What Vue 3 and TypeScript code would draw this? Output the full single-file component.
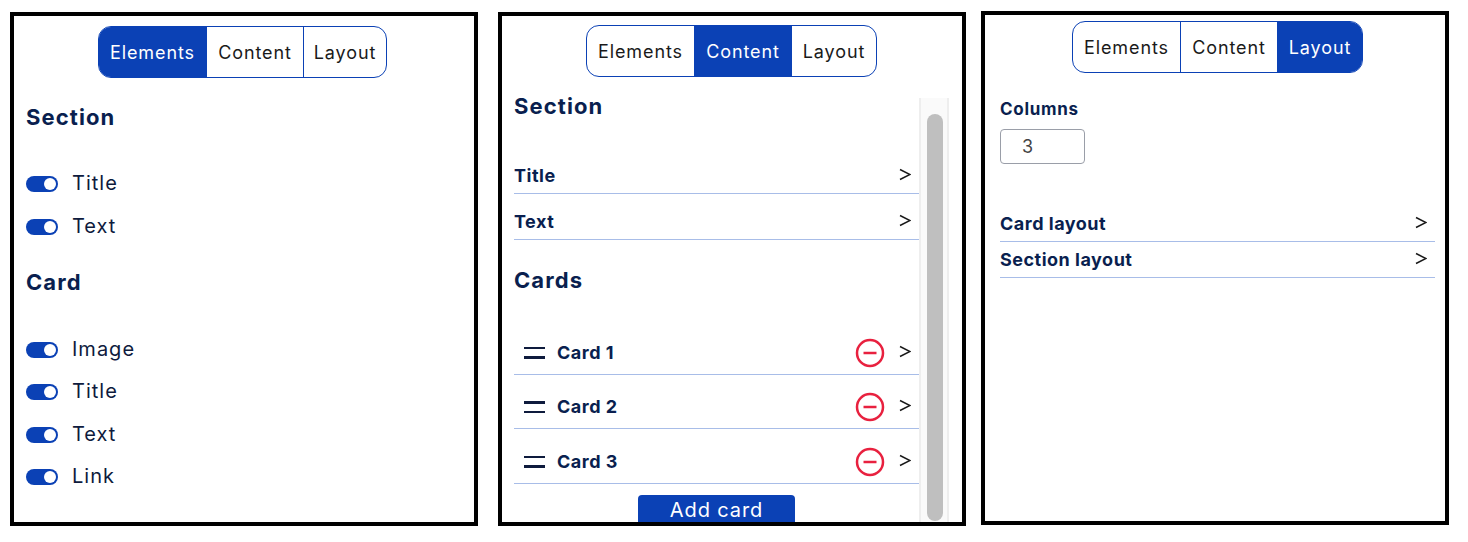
<script setup lang="ts">
const tabNames = ['Elements', 'Content', 'Layout']
const sectionToggles = ['Title', 'Text']
const cardToggles = ['Image', 'Title', 'Text', 'Link']
const contentRows = ['Title', 'Text']
const cards = ['Card 1', 'Card 2', 'Card 3']
const layoutRows = ['Card layout', 'Section layout']
</script>

<template>
  <div class="page">
    <section class="panel panel-elements">
      <div class="tabs tabs-narrow">
        <div v-for="t in tabNames" :key="t" class="tab" :class="{ active: t === 'Elements' }">{{ t }}</div>
      </div>
      <h2 class="heading first">Section</h2>
      <div class="toggles">
        <div v-for="t in sectionToggles" :key="t" class="toggle-row">
          <span class="toggle"><span class="knob"></span></span>
          <span class="toggle-label">{{ t }}</span>
        </div>
      </div>
      <h2 class="heading second">Card</h2>
      <div class="toggles toggles-card">
        <div v-for="t in cardToggles" :key="t" class="toggle-row">
          <span class="toggle"><span class="knob"></span></span>
          <span class="toggle-label">{{ t }}</span>
        </div>
      </div>
    </section>

    <section class="panel panel-content">
      <div class="tabs">
        <div v-for="t in tabNames" :key="t" class="tab" :class="{ active: t === 'Content' }">{{ t }}</div>
      </div>
      <div class="scroller">
        <div class="scroll-main">
          <h2 class="heading tight">Section</h2>
          <div class="rows">
            <div v-for="r in contentRows" :key="r" class="row row-content">
              <span class="row-label">{{ r }}</span>
              <svg class="chev" viewBox="0 0 12 14" width="12" height="14"><path d="M1 1.5 L11 6.5 L1 11.5" /></svg>
            </div>
          </div>
          <h2 class="heading cards-heading">Cards</h2>
          <div class="rows">
            <div v-for="c in cards" :key="c" class="row row-card">
              <span class="handle"><i></i><i></i></span>
              <span class="row-label">{{ c }}</span>
              <svg class="remove" viewBox="0 0 30 30" width="30" height="30">
                <circle cx="15" cy="15" r="13" />
                <line x1="8.5" y1="15" x2="21.5" y2="15" />
              </svg>
              <svg class="chev" viewBox="0 0 12 14" width="12" height="14"><path d="M1 1.5 L11 6.5 L1 11.5" /></svg>
            </div>
          </div>
          <button class="add" type="button">Add card</button>
        </div>
        <div class="track"><div class="thumb"></div></div>
      </div>
    </section>

    <section class="panel panel-layout">
      <div class="tabs">
        <div v-for="t in tabNames" :key="t" class="tab" :class="{ active: t === 'Layout' }">{{ t }}</div>
      </div>
      <div class="field-label">Columns</div>
      <input class="number" type="text" value="3" readonly />
      <div class="rows layout-rows">
        <div v-for="r in layoutRows" :key="r" class="row row-layout">
          <span class="row-label">{{ r }}</span>
          <svg class="chev" viewBox="0 0 12 14" width="12" height="14"><path d="M1 1.5 L11 6.5 L1 11.5" /></svg>
        </div>
      </div>
    </section>
  </div>
</template>

<style>
html, body { margin: 0; background: #fff; }
</style>

<style scoped>
.page {
  display: flex;
  align-items: flex-start;
  padding: 11px 0 0 10px;
  font-family: Inter, "Open Sans", sans-serif;
}
.panel {
  position: relative;
  box-sizing: border-box;
  width: 468px;
  height: 514px;
  padding: 4px 17px 0 16px;
  background: #fff;
}
.panel::after {
  content: "";
  position: absolute;
  inset: 0;
  border: 4px solid #000;
  pointer-events: none;
}
.panel-elements { margin-top: 1px; padding: 14px 19px 0 16px; }
.panel-content { margin: 1px 0 0 20px; padding-top: 13px; }
.panel-layout { margin-left: 15px; padding: 10px 14px 0 19px; }

.tabs {
  box-sizing: border-box;
  display: grid;
  grid-template-columns: 107px 97px 1fr;
  width: 291px;
  height: 52px;
  margin: 0 auto;
  border: 1px solid #0b41b5;
  border-radius: 13px;
  overflow: hidden;
}
.tabs-narrow { width: 289px; }
.tab {
  display: flex;
  align-items: center;
  justify-content: center;
  border-left: 1px solid #0b41b5;
  font-size: 18px;
  letter-spacing: 0.9px;
  color: #1a1a1a;
}
.tab:first-child { border-left: 0; }
.tab.active { background: #0b41b5; color: #fff; }

.heading {
  margin: 0;
  font-size: 22px;
  line-height: 26px;
  font-weight: 700;
  letter-spacing: 1.1px;
  color: #0a1f4f;
}
.heading.first { margin-top: 26px; }
.heading.second { margin-top: 21px; }
.heading.tight { line-height: 16px; }
.cards-heading { margin-top: 27px; }

.toggles { margin-top: 33px; }
.toggles-card { margin-top: 33.5px; }
.toggle-row {
  display: flex;
  align-items: center;
  gap: 14px;
  height: 42.5px;
}
.toggle {
  box-sizing: border-box;
  display: flex;
  justify-content: flex-end;
  align-items: center;
  width: 32px;
  height: 16px;
  padding-right: 2px;
  border-radius: 8px;
  background: #0b41b5;
}
.knob {
  width: 12px;
  height: 12px;
  border-radius: 50%;
  background: #fff;
}
.toggle-label {
  margin-top: -2px;
  font-size: 20px;
  letter-spacing: 1px;
  color: #0e1b3d;
}

.scroller {
  display: flex;
  height: 429px;
  margin-top: 21px;
}
.scroll-main { width: 405px; }
.track {
  box-sizing: border-box;
  width: 30px;
  height: 429px;
  padding: 16px 6px 6px;
  background: #fafafa;
  border-left: 2px solid #eee;
  border-right: 2px solid #eee;
}
.thumb {
  width: 16px;
  height: 407px;
  border-radius: 8px;
  background: #bfbfbf;
}

.row {
  box-sizing: border-box;
  display: flex;
  align-items: flex-end;
  border-bottom: 1px solid #a8bde8;
}
.row-content { height: 46px; padding: 0 8px 6px 0; }
.rows .row-content:first-child { margin-top: 34px; }
.row-card { height: 54.5px; padding: 0 8px 10px 10px; }
.rows .row-card:first-child { margin-top: 27px; }
.row-layout { height: 36px; padding: 0 8px 6px 0; }
.layout-rows { margin-top: 42px; }

.row-label {
  flex: 1;
  font-size: 18px;
  line-height: 22px;
  font-weight: 700;
  letter-spacing: 0.5px;
  color: #0a1f4f;
}
.row-card .row-label { margin-left: 12px; }
.chev {
  flex: none;
  margin-bottom: 5px;
  fill: none;
  stroke: #1a1a1a;
  stroke-width: 1.5;
}
.remove {
  flex: none;
  margin: 0 14px -4px 0;
  fill: none;
  stroke: #e8213f;
  stroke-width: 2.5;
}
.handle {
  display: flex;
  flex-direction: column;
  gap: 7px;
  width: 21px;
  padding-bottom: 5px;
  flex: none;
}
.handle i {
  display: block;
  height: 2.5px;
  background: #0e1b3d;
}
.add {
  display: block;
  width: 157px;
  height: 32px;
  margin: 11.5px auto 0;
  padding: 0 0 3px;
  border: 0;
  border-radius: 4px;
  background: #0b41b5;
  color: #fff;
  font-family: inherit;
  font-size: 20px;
  letter-spacing: 0.9px;
}

.field-label {
  margin-top: 25px;
  font-size: 17px;
  line-height: 22px;
  font-weight: 700;
  letter-spacing: 0.7px;
  color: #0a1f4f;
}
.number {
  display: block;
  box-sizing: border-box;
  width: 85px;
  height: 35px;
  margin-top: 9px;
  padding: 0 0 0 21px;
  border: 1.5px solid #9a9ea8;
  border-radius: 4px;
  outline: 0;
  font-family: inherit;
  font-size: 18px;
  color: #444;
  background: #fff;
}
</style>
